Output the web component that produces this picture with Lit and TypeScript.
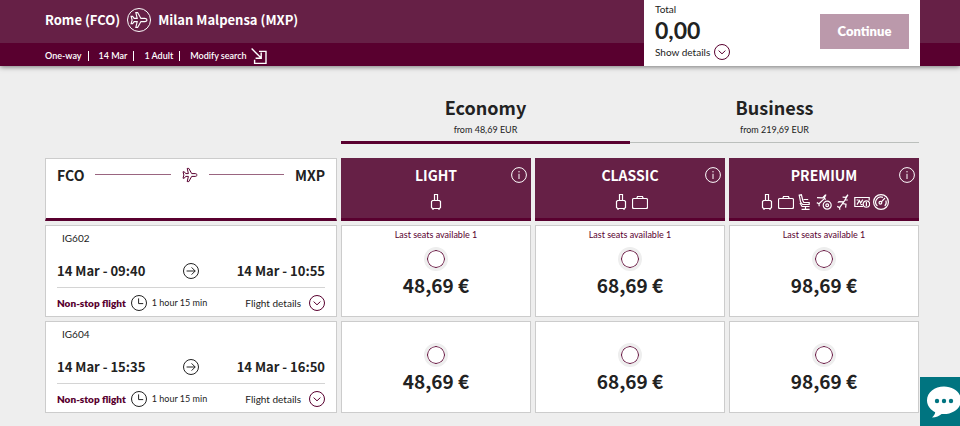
import { LitElement, html, css, svg, nothing } from "lit";
import { customElement, state } from "lit/decorators.js";

const PLANE =
  "M15 8c0-.9-1-1.400-2-1.400H9.700L6.800 1.400H5.200l1.200 5.200H3.700L2.300 4.800H1L1.900 8 1 11.200h1.300l1.400-1.800h2.700l-1.200 5.200h1.600l2.900-5.200H13c1 0 2-.5 2-1.400z";

const icon = (shape: unknown, size = 16) => html`
  <svg class="icon" width=${size} height=${size} viewBox="0 0 16 16" aria-hidden="true">${shape}</svg>
`;

const plane = svg`<path d=${PLANE} />`;
const chevron = svg`<circle cx="8" cy="8" r="7.5" /><path d="M4.6 6.6 8 9.8l3.4-3.2" />`;
const arrow = svg`<circle cx="8" cy="8" r="7.5" /><path d="M3.6 8h8.6M8.6 4.4 12.2 8l-3.6 3.6" />`;
const clock = svg`<circle cx="8" cy="8" r="7.5" /><path d="M7.6 3.4V8.6h4.6" />`;
const info = svg`<circle cx="8" cy="8" r="7.4" /><path d="M8 6.8v5.2M8 4v1.4" />`;

const perkIcons: Record<string, unknown> = {
  "Cabin bag": svg`<path d="M6.500 6.500v-6h3v6M4.500 6.500h7l1 1v6l-1 1h-7l-1-1v-6zM5 14.500V16M11 14.500V16" />`,
  "Checked bag": svg`<rect x=".5" y="4.5" width="15" height="10" rx="1.4" /><path d="M4.800 4.500 5.500 2.500h5l.7 2" />`,
  "Seat choice": svg`<path d="M2.200 1.200 4.400.8l1.400 5.700 1 2h5.400v2H5.600L3.600 8zM3 9l2 3.500h7.500M6.600 5.500h4.600M8.500 12.500v2.500M4.600 15.400h8" />`,
  "Free change": svg`<path d="m1 3.600 5.600.2L9.400.8M10 .6 7.800 5.200 3 9.800M.8 8.600l2.200 1.200.2 2.400M8 3.400 9.600 5.600" /><circle cx="11.2" cy="11.2" r="4" /><circle cx="11.2" cy="11.2" r="1.400" />`,
  "Earlier flight": svg`<path d="M13 .8 9.600 6.600l-5 7M12.800 1 10.600 3.400 7.600 3.200M9.600 6h3.200M9.200 7.800 4 7.600l-1.200 1M8 9.600l3 .6-.4 3.400M2.200 12.400l2.400 1.200.2 2.200" />`,
  "Refund": svg`<path d="M9 12.500H.8v-9h14.400v3M3 10.600l2.400-4 1.200 2.400L8.800 5.600M2.600 6h2M6.600 10.600h2" /><circle cx="12.4" cy="10" r="3.200" /><path d="M12.400 8v4" />`,
  "Fast track": svg`<circle cx="8" cy="8" r="7.4" /><circle cx="7.400" cy="8.800" r="1.400" /><path d="M8.400 7.800 12 4M4.400 12a5.200 5.200 0 0 1 5.600-8.600M12.800 6.400a5.200 5.200 0 0 1-1 5.600" />`,
};

const fares = [
  { name: "LIGHT", price: "48,69 €", perks: ["Cabin bag"] },
  { name: "CLASSIC", price: "68,69 €", perks: ["Cabin bag", "Checked bag"] },
  { name: "PREMIUM", price: "98,69 €", perks: Object.keys(perkIcons) },
];

const flights = [
  { code: "IG602", departs: "14 Mar - 09:40", arrives: "14 Mar - 10:55", note: "Last seats available 1" },
  { code: "IG604", departs: "14 Mar - 15:35", arrives: "14 Mar - 16:50", note: "" },
];

const tabs = [
  { name: "Economy", from: "from 48,69 EUR" },
  { name: "Business", from: "from 219,69 EUR" },
];

const shared = css`
  * { box-sizing: border-box; }
  :host { --display: "Noto Sans CJK SC", "Open Sans", sans-serif; }
  button {
    font: inherit;
    color: inherit;
    background: none;
    border: 0;
    padding: 0;
    cursor: pointer;
  }
  .icon {
    display: block;
    flex: none;
    fill: none;
    stroke: currentColor;
    stroke-width: 1;
  }
`;

@customElement("trip-header")
class TripHeader extends LitElement {
  static styles = [
    shared,
    css`
      :host {
        display: flex;
        justify-content: space-between;
        padding: 0 40px 0 45px;
        color: #fff;
        background: linear-gradient(#662046 43px, #59002f 43px);
        box-shadow: 0 1px 5px rgba(0, 0, 0, 0.5);
      }
      .route {
        display: flex;
        align-items: center;
        gap: 7px;
        height: 43px;
        margin: 0;
        padding-bottom: 4px;
        font: 700 13px var(--display);
      }
      .badge {
        display: grid;
        place-items: center;
        width: 24px;
        height: 24px;
        border: 1px solid #fff;
        border-radius: 50%;
      }
      .facts {
        display: flex;
        align-items: center;
        height: 23px;
        margin: 0;
        padding: 2px 0 0;
        list-style: none;
        font-size: 9px;
        font-weight: 600;
      }
      .fact { line-height: 10px; }
      .fact + .fact {
        margin-left: 6px;
        padding-left: 10px;
        border-left: 1px solid #fff;
      }
      .modify {
        display: flex;
        align-items: center;
        gap: 4px;
        height: 10px;
        color: inherit;
        text-decoration: none;
      }
      .total {
        display: flex;
        align-items: center;
        justify-content: space-between;
        width: 276px;
        padding: 0 11px 4px;
        color: #222;
        background: #fff;
      }
      .label { font-size: 10px; line-height: 14px; }
      .amount { font-size: 23px; line-height: 28px; font-weight: 700; }
      .details {
        display: flex;
        align-items: center;
        gap: 4px;
        font-size: 10px;
        line-height: 14px;
      }
      .details .icon { color: #59002f; }
      .continue {
        width: 89px;
        height: 35px;
        color: #fff;
        background: #bb99ab;
        font-size: 13px;
        font-weight: 800;
      }
    `,
  ];

  render() {
    return html`
      <div>
        <h1 class="route">
          Rome (FCO)
          <span class="badge">${icon(plane, 18)}</span>
          Milan Malpensa (MXP)
        </h1>
        <ul class="facts">
          <li class="fact">One-way</li>
          <li class="fact">14 Mar</li>
          <li class="fact">1 Adult</li>
          <li class="fact">
            <a class="modify" href="#search">Modify search
              ${icon(svg`<path d="M.6.6 10.400 10.200M10.200 4.400v5.800H4.600M8 3.400H15v12H3.600V11.800" stroke-width="1.4" />`)}
            </a>
          </li>
        </ul>
      </div>
      <div class="total">
        <div>
          <div class="label">Total</div>
          <div class="amount">0,00</div>
          <button class="details" type="button">Show details ${icon(chevron)}</button>
        </div>
        <button class="continue" type="button">Continue</button>
      </div>
    `;
  }
}

@customElement("cabin-tabs")
class CabinTabs extends LitElement {
  @state() active = 0;

  static styles = [
    shared,
    css`
      :host {
        display: flex;
        color: #222;
      }
      .tab {
        flex: 1;
        display: flex;
        flex-direction: column;
        align-items: center;
        height: 50px;
        border-bottom: 1px solid #bbbfbc;
      }
      .tab.active {
        border-color: #59002f;
        box-shadow: inset 0 -1px #59002f, 0 1px #59002f;
      }
      .name { font: 700 18px/29px var(--display); }
      .from { font-size: 9px; line-height: 16px; }
    `,
  ];

  render() {
    return tabs.map(
      (tab, i) => html`
        <button
          class="tab ${i === this.active ? "active" : ""}"
          type="button"
          aria-pressed=${i === this.active}
          @click=${() => (this.active = i)}
        >
          <span class="name">${tab.name}</span>
          <span class="from">${tab.from}</span>
        </button>
      `,
    );
  }
}

@customElement("fare-table")
class FareTable extends LitElement {
  static styles = [
    shared,
    css`
      :host {
        display: block;
        color: #222;
      }
      .table, .body { display: grid; gap: 4px; }
      .head { display: block; }
      .row {
        display: grid;
        grid-template-columns: minmax(0, 292fr) repeat(3, minmax(0, 190fr));
        gap: 4px;
      }
      .cell {
        min-height: 92px;
        padding: 0;
        background: #fff;
        border: 1px solid #ccc;
        text-align: left;
        font-weight: 400;
      }
      .route {
        display: flex;
        align-items: flex-start;
        gap: 11px;
        min-height: 63px;
        padding: 8px 11px;
        border-bottom: 3px solid #59002f;
        font: 700 14px/16px var(--display);
      }
      .route .icon { color: #59002f; }
      .line { flex: 1; height: 1px; margin-top: 7px; background: #9a6580; }
      .fare {
        display: grid;
        grid-template-columns: 24px 1fr 24px;
        align-content: start;
        justify-items: center;
        row-gap: 10px;
        min-height: 63px;
        padding-top: 8px;
        color: #fff;
        background: #662046;
        border: 0;
        border-bottom: 3px solid #59002f;
      }
      .title {
        grid-column: 2;
        font: 700 14px/18px var(--display);
      }
      .perks {
        grid-column: 1 / -1;
        display: flex;
        gap: 3px;
      }
      .perks .icon { stroke-width: 1.2; }
      .flight { padding: 5px 11px 0; }
      .code { padding-left: 5px; font-size: 10px; line-height: 14px; }
      .times {
        display: flex;
        align-items: center;
        justify-content: space-between;
        margin-top: 15px;
        padding-bottom: 5px;
        border-bottom: 1px solid #d4d4d4;
        font: 700 13px/22px var(--display);
      }
      .meta {
        display: flex;
        align-items: center;
        gap: 5px;
        margin-top: 7px;
        font-size: 10px;
        line-height: 16px;
      }
      .stops { color: #59002f; font-weight: 800; }
      .duration { font-size: 9px; }
      .details {
        display: flex;
        align-items: center;
        gap: 8px;
        margin-left: auto;
      }
      .details .icon { color: #59002f; }
      .option {
        display: flex;
        flex-direction: column;
        align-items: center;
        height: 100%;
        padding-top: 2px;
        cursor: pointer;
      }
      .note { min-height: 14px; color: #59002f; font-size: 9px; line-height: 14px; }
      .radio {
        appearance: none;
        width: 18px;
        height: 18px;
        margin: 8px 0 5px;
        border: 1px solid #59002f;
        border-radius: 50%;
        outline: 3px solid #eee;
        background: #fff;
      }
      .radio:checked { background: #59002f; }
      .price { font: 700 19px/24px var(--display); }
    `,
  ];

  render() {
    return html`
      <table class="table">
        <thead class="head">
          <tr class="row">
            <th class="cell route" scope="col">
              FCO <span class="line"></span>${icon(plane)}<span class="line"></span> MXP
            </th>
            ${fares.map(
              (fare) => html`
                <th class="cell fare" scope="col">
                  <span class="title">${fare.name}</span>
                  <button class="info" type="button" aria-label="About ${fare.name}">${icon(info)}</button>
                  <span class="perks">${fare.perks.map((perk) => icon(perkIcons[perk]))}</span>
                </th>
              `,
            )}
          </tr>
        </thead>
        <tbody class="body">
          ${flights.map(
            (flight) => html`
              <tr class="row">
                <th class="cell flight" scope="row">
                  <div class="code">${flight.code}</div>
                  <div class="times">
                    <span>${flight.departs}</span>${icon(arrow)}<span>${flight.arrives}</span>
                  </div>
                  <div class="meta">
                    <span class="stops">Non-stop flight</span>${icon(clock)}
                    <span class="duration">1 hour 15 min</span>
                    <button class="details" type="button">Flight details ${icon(chevron)}</button>
                  </div>
                </th>
                ${fares.map(
                  (fare) => html`
                    <td class="cell">
                      <label class="option">
                        <span class="note">${flight.note || nothing}</span>
                        <input class="radio" type="radio" name="fare" />
                        <span class="price">${fare.price}</span>
                      </label>
                    </td>
                  `,
                )}
              </tr>
            `,
          )}
        </tbody>
      </table>
    `;
  }
}

@customElement("app-root")
class AppRoot extends LitElement {
  static styles = [
    shared,
    css`
      :host {
        display: block;
        min-height: 100vh;
        background: #eee;
        font-family: Lato, "Open Sans", sans-serif;
      }
      .main { padding: 27px 41px 13px 45px; }
      .tabs { margin: 0 0 15px 296px; }
      .chat {
        position: fixed;
        right: 0;
        bottom: 0;
        width: 40px;
        height: 49px;
        overflow: hidden;
        background: #007480;
      }
      .bubble { display: block; }
    `,
  ];

  render() {
    return html`
      <trip-header></trip-header>
      <main class="main">
        <cabin-tabs class="tabs"></cabin-tabs>
        <fare-table></fare-table>
      </main>
      <button class="chat" type="button" aria-label="Chat">
        <svg class="bubble" width="40" height="49" viewBox="0 0 40 49" aria-hidden="true">
          <path fill="#fff" d="M24 9.500c9.400 0 17 6 17 13.700S33.400 37 24 37c-.8 0-1.600 0-2.400-.1-2.200 2-5.400 3.300-9.600 3.600 1.900-1.600 2.900-3.200 3.200-5.300C10.300 32.700 7 28.400 7 23.200 7 15.500 14.600 9.500 24 9.500z" />
          <g fill="#007480"><circle cx="17" cy="24" r="2.200" /><circle cx="24" cy="24" r="2.200" /><circle cx="31" cy="24" r="2.200" /></g>
        </svg>
      </button>
    `;
  }
}
